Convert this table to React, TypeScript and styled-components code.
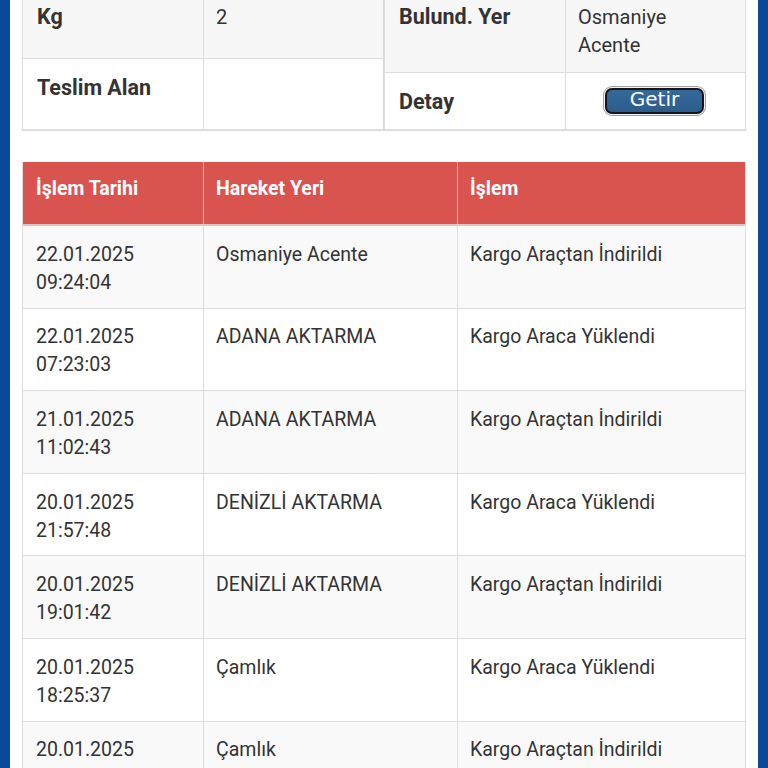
import React from "react";
import styled, { createGlobalStyle } from "styled-components";

const GlobalStyle = createGlobalStyle`
  html, body { margin: 0; padding: 0; background: #ffffff; }
  body { font-family: Roboto, "Noto Sans", "DejaVu Sans", sans-serif; color: #333333; }
  * { box-sizing: border-box; }
`;

const Frame = styled.div`
  width: 768px;
  height: 768px;
  overflow: hidden;
  border-left: 10px solid #0b4a9a;
  border-right: 10px solid #0b4a9a;
  background: #ffffff;
  padding: 0 12px;
`;

const Content = styled.div`
  margin-top: -13px;
  display: flex;
  flex-direction: column;
  gap: 32px;
`;

const InfoGrid = styled.div`
  display: grid;
  grid-template-columns: 1fr 1fr;
  align-items: stretch;
`;

const InfoTable = styled.div`
  display: flex;
  flex-direction: column;
  border: 1px solid #dddddd;
  box-shadow: 0 1px 1px rgba(0, 0, 0, 0.12);
  background: #ffffff;
`;

const InfoRow = styled.div<{ $striped?: boolean }>`
  flex: 1;
  display: grid;
  grid-template-columns: 180px 1fr;
  background: ${(p) => (p.$striped ? "#f7f7f7" : "#ffffff")};
  & + & { border-top: 1px solid #dddddd; }
`;

const Label = styled.div`
  padding: 15px 12px 13px 14px;
  font-size: 21.5px;
  line-height: 28px;
  font-weight: 700;
  color: #333333;
`;

const Value = styled.div<{ $center?: boolean }>`
  padding: ${(p) => (p.$center ? "14px 12px" : "15px 12px 13px 12px")};
  font-size: 20px;
  line-height: 28px;
  color: #333333;
  border-left: 1px solid #dddddd;
  display: flex;
  align-items: ${(p) => (p.$center ? "center" : "flex-start")};
  justify-content: ${(p) => (p.$center ? "center" : "flex-start")};
`;

const GetirButton = styled.button`
  width: 99px;
  height: 26px;
  margin: 0 0 0 -2px;
  padding: 0;
  border: 2px solid #161616;
  border-radius: 7px;
  background: linear-gradient(#36699a, #2b5c8c);
  box-shadow: 0 0 0 1px #f2f2f2, 0 0 0 2px #a0a0a0;
  color: #ffffff;
  font-family: "DejaVu Sans", Verdana, sans-serif;
  font-size: 20px;
  line-height: 18px;
  display: flex;
  align-items: flex-start;
  justify-content: center;
  overflow: hidden;
  cursor: pointer;
`;

const TrackTable = styled.div`
  border: 1px solid #dddddd;
  border-top: none;
`;

const TrackHead = styled.div`
  display: grid;
  grid-template-columns: 180px 254px 1fr;
  background: #d9534f;
  border-bottom: 2px solid #e0c4c4;
`;

const HeadCell = styled.div<{ $first?: boolean }>`
  padding: 13px 12px 21px ${(p) => (p.$first ? "13px" : "12px")};
  font-size: 19.5px;
  line-height: 28px;
  font-weight: 700;
  color: #ffffff;
  border-left: ${(p) => (p.$first ? "none" : "1px solid #e8b5b3")};
`;

const TrackRow = styled.div<{ $striped?: boolean }>`
  display: grid;
  grid-template-columns: 180px 254px 1fr;
  background: ${(p) => (p.$striped ? "#f9f9f9" : "#ffffff")};
  & + & { border-top: 1px solid #dddddd; }
`;

const Cell = styled.div<{ $first?: boolean }>`
  padding: 14.8px 12px 10.8px ${(p) => (p.$first ? "13px" : "12px")};
  font-size: 19.5px;
  line-height: 28px;
  color: #333333;
  border-left: ${(p) => (p.$first ? "none" : "1px solid #dddddd")};
`;

const rows = [
  ["22.01.2025", "09:24:04", "Osmaniye Acente", "Kargo Araçtan İndirildi"],
  ["22.01.2025", "07:23:03", "ADANA AKTARMA", "Kargo Araca Yüklendi"],
  ["21.01.2025", "11:02:43", "ADANA AKTARMA", "Kargo Araçtan İndirildi"],
  ["20.01.2025", "21:57:48", "DENİZLİ AKTARMA", "Kargo Araca Yüklendi"],
  ["20.01.2025", "19:01:42", "DENİZLİ AKTARMA", "Kargo Araçtan İndirildi"],
  ["20.01.2025", "18:25:37", "Çamlık", "Kargo Araca Yüklendi"],
  ["20.01.2025", "17:48:12", "Çamlık", "Kargo Araçtan İndirildi"],
];

export default function App() {
  return (
    <>
      <GlobalStyle />
      <Frame>
        <Content>
          <InfoGrid>
            <InfoTable>
              <InfoRow $striped>
                <Label>Kg</Label>
                <Value>2</Value>
              </InfoRow>
              <InfoRow>
                <Label>Teslim Alan</Label>
                <Value />
              </InfoRow>
            </InfoTable>
            <InfoTable>
              <InfoRow $striped>
                <Label>Bulund. Yer</Label>
                <Value>
                  Osmaniye
                  <br />
                  Acente
                </Value>
              </InfoRow>
              <InfoRow>
                <Label>Detay</Label>
                <Value $center>
                  <GetirButton type="button">Getir</GetirButton>
                </Value>
              </InfoRow>
            </InfoTable>
          </InfoGrid>

          <TrackTable>
            <TrackHead>
              <HeadCell $first>İşlem Tarihi</HeadCell>
              <HeadCell>Hareket Yeri</HeadCell>
              <HeadCell>İşlem</HeadCell>
            </TrackHead>
            {rows.map((r, i) => (
              <TrackRow key={i} $striped={i % 2 === 0}>
                <Cell $first>
                  {r[0]}
                  <br />
                  {r[1]}
                </Cell>
                <Cell>{r[2]}</Cell>
                <Cell>{r[3]}</Cell>
              </TrackRow>
            ))}
          </TrackTable>
        </Content>
      </Frame>
    </>
  );
}
